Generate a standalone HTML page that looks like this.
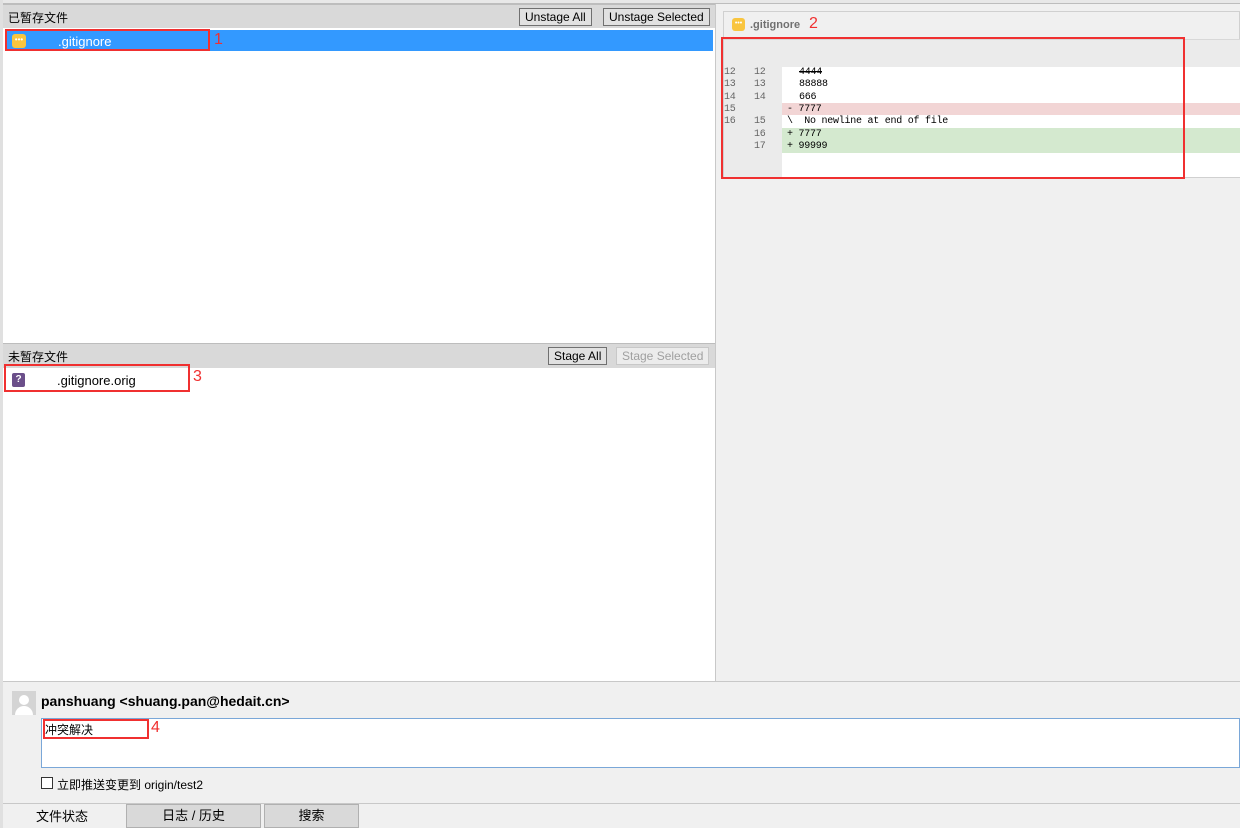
<!DOCTYPE html>
<html><head><meta charset="utf-8"><style>
*{margin:0;padding:0;box-sizing:border-box}
body{width:1240px;height:828px;overflow:hidden;background:#f0f0f0;font-family:"Liberation Sans","Noto Sans CJK SC",sans-serif;font-size:12px;color:#000;position:relative}
.a{position:absolute}
.hdr{background:#d9d9d9;border-top:1px solid #bdbdbd}
.btn{position:absolute;border:1px solid #707070;background:#e1e1e1;font-size:12px;height:18px;line-height:16px;padding:0 5px}
.red{position:absolute;border:2px solid #f03030}
.rn{position:absolute;color:#f03030;font-size:16px}
.mono{font-family:"Liberation Mono","DejaVu Sans Mono",monospace;font-size:10px}
.ln{position:absolute;height:12.3px;line-height:12.3px;white-space:pre}
</style></head><body>
<div class="a" style="left:0;top:0;width:1240px;height:4px;background:#e8e8e8;border-bottom:1px solid #bdbdbd"></div>
<div class="a" style="left:0;top:0;width:3px;height:828px;background:#e0e0e0"></div>
<div class="a" style="left:3px;top:4px;width:713px;height:340px;background:#fff;border-right:1px solid #c8c8c8"></div>
<div class="a hdr" style="left:3px;top:4px;width:712px;height:24px"></div>
<div class="a" style="left:8px;top:9px">已暂存文件</div>
<div class="btn" style="left:519px;top:8px">Unstage All</div>
<div class="btn" style="left:603px;top:8px">Unstage Selected</div>
<div class="a" style="left:5px;top:30px;width:708px;height:21px;background:#3399ff"></div>
<div class="a" style="left:12px;top:34px;width:14px;height:14px;background:#f9c53f;border-radius:3px;color:#fff;font-size:8px;text-align:center;line-height:12px">•••</div>
<div class="a" style="left:58px;top:34px;color:#fff;font-size:13px">.gitignore</div>
<div class="red" style="left:5px;top:29px;width:205px;height:22px"></div>
<div class="rn" style="left:214px;top:31px">1</div>
<div class="a" style="left:3px;top:343px;width:713px;height:338px;background:#fff;border-right:1px solid #c8c8c8"></div>
<div class="a hdr" style="left:3px;top:343px;width:712px;height:25px"></div>
<div class="a" style="left:8px;top:348px">未暂存文件</div>
<div class="btn" style="left:548px;top:347px">Stage All</div>
<div class="btn" style="left:616px;top:347px;color:#a0a0a0;border-color:#c8c8c8;background:#ececec">Stage Selected</div>
<div class="a" style="left:12px;top:373px;width:13px;height:14px;background:#6b4f8a;border-radius:2px;color:#fff;font-size:10px;font-weight:bold;text-align:center;line-height:14px">?</div>
<div class="a" style="left:57px;top:373px;font-size:13px">.gitignore.orig</div>
<div class="red" style="left:4px;top:364px;width:186px;height:28px"></div>
<div class="rn" style="left:193px;top:368px">3</div>
<div class="a" style="left:716px;top:4px;width:524px;height:677px;background:#f0f0f0"></div>
<div class="a" style="left:723px;top:11px;width:517px;height:167px;border:1px solid #d0d0d0;background:#f0f0f0"></div>
<div class="a" style="left:732px;top:18px;width:13px;height:13px;background:#f9c53f;border-radius:3px;color:#fff;font-size:7px;text-align:center;line-height:11px">•••</div>
<div class="a" style="left:750px;top:19px;color:#707070;font-weight:bold;font-size:11px">.gitignore</div>
<div class="rn" style="left:809px;top:15px">2</div>
<div class="a" style="left:724px;top:39px;width:516px;height:28px;background:#ebebeb;border-top:1px solid #d8d8d8"></div>
<div class="a" style="left:724px;top:67px;width:58px;height:110px;background:#ebebeb"></div>
<div class="a" style="left:782px;top:67px;width:458px;height:110px;background:#fff"></div>
<div class="a" style="left:782px;top:103px;width:458px;height:12px;background:#f2d5d5"></div>
<div class="a" style="left:782px;top:128px;width:458px;height:25px;background:#d4e9cf"></div>
<div class="a mono" style="left:724px;top:67px;width:516px;color:#000;letter-spacing:-0.25px">
<div class="ln" style="top:0;left:0;color:#666">12</div><div class="ln" style="top:0;left:30px;color:#666">12</div><div class="ln" style="top:0;left:75px">4444</div>
<div class="ln" style="top:12.3px;left:0;color:#666">13</div><div class="ln" style="top:12.3px;left:30px;color:#666">13</div><div class="ln" style="top:12.3px;left:75px">88888</div>
<div class="ln" style="top:24.6px;left:0;color:#666">14</div><div class="ln" style="top:24.6px;left:30px;color:#666">14</div><div class="ln" style="top:24.6px;left:75px">666</div>
<div class="ln" style="top:36.9px;left:0;color:#666">15</div><div class="ln" style="top:36.9px;left:63px">- 7777</div>
<div class="ln" style="top:49.2px;left:0;color:#666">16</div><div class="ln" style="top:49.2px;left:30px;color:#666">15</div><div class="ln" style="top:49.2px;left:63px">\  No newline at end of file</div>
<div class="ln" style="top:61.5px;left:30px;color:#666">16</div><div class="ln" style="top:61.5px;left:63px">+ 7777</div>
<div class="ln" style="top:73.8px;left:30px;color:#666">17</div><div class="ln" style="top:73.8px;left:63px">+ 99999</div>
</div>
<div class="a" style="left:799px;top:71px;width:23px;height:1px;background:#000"></div>
<div class="red" style="left:721px;top:37px;width:464px;height:142px"></div>
<div class="a" style="left:3px;top:681px;width:1237px;height:1px;background:#c8c8c8"></div>
<div class="a" style="left:12px;top:691px;width:24px;height:24px;background:#d4d4d4;overflow:hidden"><div class="a" style="left:7px;top:4px;width:10px;height:10px;border-radius:50%;background:#fff"></div><div class="a" style="left:3px;top:15px;width:18px;height:9px;border-radius:9px 9px 0 0;background:#fff"></div></div>
<div class="a" style="left:41px;top:693px;font-weight:bold;font-size:14px">panshuang &lt;shuang.pan@hedait.cn&gt;</div>
<div class="a" style="left:41px;top:718px;width:1199px;height:50px;background:#fff;border:1px solid #7aa7d8"></div>
<div class="a" style="left:45px;top:721px;font-size:12px">冲突解决</div>
<div class="red" style="left:43px;top:719px;width:106px;height:20px"></div>
<div class="rn" style="left:151px;top:719px">4</div>
<div class="a" style="left:41px;top:777px;width:12px;height:12px;border:1px solid #333;background:#fff"></div>
<div class="a" style="left:57px;top:776px;font-size:12px">立即推送变更到 origin/test2</div>
<div class="a" style="left:3px;top:803px;width:1237px;height:1px;background:#c8c8c8"></div>
<div class="a" style="left:36px;top:806px;font-size:13px">文件状态</div>
<div class="a" style="left:126px;top:804px;width:135px;height:24px;background:#d9d9d9;border:1px solid #b0b0b0;text-align:center;line-height:22px;font-size:13px">日志 / 历史</div>
<div class="a" style="left:264px;top:804px;width:95px;height:24px;background:#d9d9d9;border:1px solid #b0b0b0;text-align:center;line-height:22px;font-size:13px">搜索</div>
</body></html>
